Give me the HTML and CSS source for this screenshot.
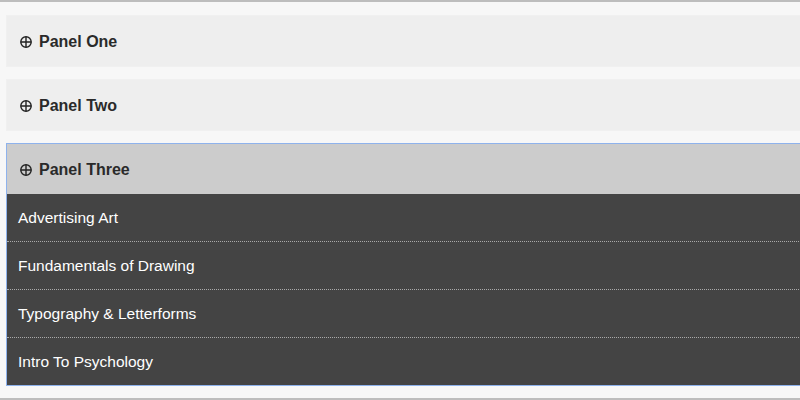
FILE: index.html
```html
<!DOCTYPE html>
<html>
<head>
<meta charset="utf-8">
<link rel="stylesheet" href="styles.css">
</head>
<body>
<div class="frame">
  <div class="panel">
    <div class="panel-head"><svg class="icon" viewBox="0 0 12 12"><circle cx="6" cy="6" r="5.2"/><path d="M6 0.8V11.2M0.8 6H11.2"/></svg>Panel One</div>
  </div>
  <div class="panel">
    <div class="panel-head"><svg class="icon" viewBox="0 0 12 12"><circle cx="6" cy="6" r="5.2"/><path d="M6 0.8V11.2M0.8 6H11.2"/></svg>Panel Two</div>
  </div>
  <div class="panel active">
    <div class="panel-head"><svg class="icon" viewBox="0 0 12 12"><circle cx="6" cy="6" r="5.2"/><path d="M6 0.8V11.2M0.8 6H11.2"/></svg>Panel Three</div>
    <ul class="panel-body">
      <li>Advertising Art</li>
      <li>Fundamentals of Drawing</li>
      <li>Typography &amp; Letterforms</li>
      <li>Intro To Psychology</li>
    </ul>
  </div>
</div>
</body>
</html>
```
FILE: styles.css
```css
html, body {
  margin: 0;
  padding: 0;
  overflow: hidden;
  background: #f7f7f7;
}
.frame {
  box-sizing: border-box;
  height: 400px;
  border-top: 2px solid #bdbdbd;
  border-bottom: 2px solid #bdbdbd;
  padding: 13px 0 0 6px;
  display: flex;
  flex-direction: column;
  gap: 12px;
  font-family: "Liberation Sans", Arial, sans-serif;
  overflow: hidden;
}
.panel {
  flex: none;
  margin-right: -30px;
  border: 1px solid #f0f0f0;
  background: #eeeeee;
}
.panel-head {
  height: 48px;
  padding-top: 2px;
  display: flex;
  align-items: center;
  padding-left: 13px;
  font-size: 16px;
  font-weight: bold;
  color: #2a2a2a;
}
.icon {
  width: 12px;
  height: 12px;
  margin-right: 7px;
  fill: none;
  stroke: #222;
  stroke-width: 1.4;
}
.panel.active {
  border-color: #8eb2ec;
}
.panel.active .panel-head {
  background: #cccccc;
}
.panel-body {
  list-style: none;
  margin: 0;
  padding: 0;
  background: #444444;
}
.panel-body li {
  height: 47px;
  display: flex;
  align-items: center;
  padding-left: 11px;
  color: #fff;
  font-size: 15.5px;
  border-top: 1px dotted #aaa;
}
.panel-body li:first-child {
  border-top: none;
}
```
